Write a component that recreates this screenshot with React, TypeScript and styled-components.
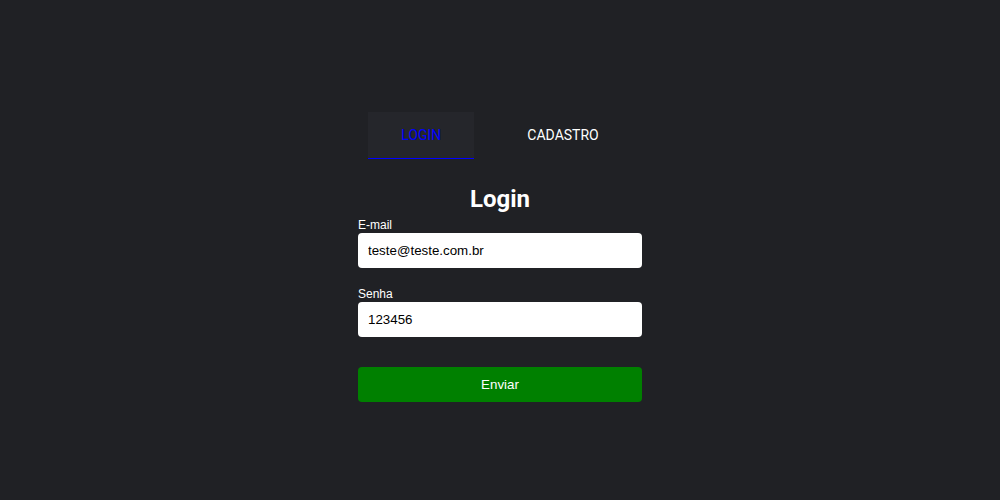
import React from "react";
import styled, { createGlobalStyle } from "styled-components";

const Global = createGlobalStyle`
  html, body { margin: 0; padding: 0; background: #202125; }
  body { font-family: "Liberation Sans", Arial, sans-serif; }
  * { box-sizing: border-box; }
`;

const Page = styled.div`
  width: 1000px;
  height: 500px;
  background: #202125;
  display: flex;
  flex-direction: column;
  align-items: center;
  padding-top: 112px;
`;

const Tabs = styled.div`
  display: flex;
  gap: 20px;
`;

const Tab = styled.button<{ $active?: boolean }>`
  height: 47px;
  padding: 0 33px;
  border: none;
  border-bottom: 1px solid ${(p) => (p.$active ? "#0000ff" : "transparent")};
  background: ${(p) => (p.$active ? "#25262b" : "transparent")};
  color: ${(p) => (p.$active ? "#0000ff" : "#ffffff")};
  font-family: Roboto, "Liberation Sans", Arial, sans-serif;
  font-size: 14px;
  cursor: pointer;
`;

const Form = styled.form`
  width: 284px;
  display: flex;
  flex-direction: column;
  margin-top: 25px;
`;

const Title = styled.h1`
  margin: 0 0 4px;
  text-align: center;
  color: #ffffff;
  font-family: Roboto, "Liberation Sans", Arial, sans-serif;
  font-size: 24px;
  line-height: 30px;
  font-weight: 700;
`;

const Field = styled.div`
  display: flex;
  flex-direction: column;
  margin-bottom: 19px;
`;

const Label = styled.label`
  color: #ffffff;
  font-size: 12px;
  line-height: 15px;
`;

const Input = styled.input`
  height: 35px;
  border: none;
  border-radius: 4px;
  background: #ffffff;
  padding: 0 10px;
  font-family: "Liberation Sans", Arial, sans-serif;
  font-size: 13.333px;
  color: #000000;
  outline: none;
`;

const Submit = styled.button`
  height: 35px;
  margin-top: 11px;
  border: none;
  border-radius: 4px;
  background: #008000;
  color: #ffffff;
  font-family: "Liberation Sans", Arial, sans-serif;
  font-size: 13.333px;
  cursor: pointer;
`;

export default function App() {
  return (
    <>
      <Global />
      <Page>
        <Tabs>
          <Tab $active>LOGIN</Tab>
          <Tab>CADASTRO</Tab>
        </Tabs>
        <Form onSubmit={(e) => e.preventDefault()}>
          <Title>Login</Title>
          <Field>
            <Label>E-mail</Label>
            <Input type="email" defaultValue="teste@teste.com.br" />
          </Field>
          <Field>
            <Label>Senha</Label>
            <Input type="text" defaultValue="123456" />
          </Field>
          <Submit type="submit">Enviar</Submit>
        </Form>
      </Page>
    </>
  );
}
